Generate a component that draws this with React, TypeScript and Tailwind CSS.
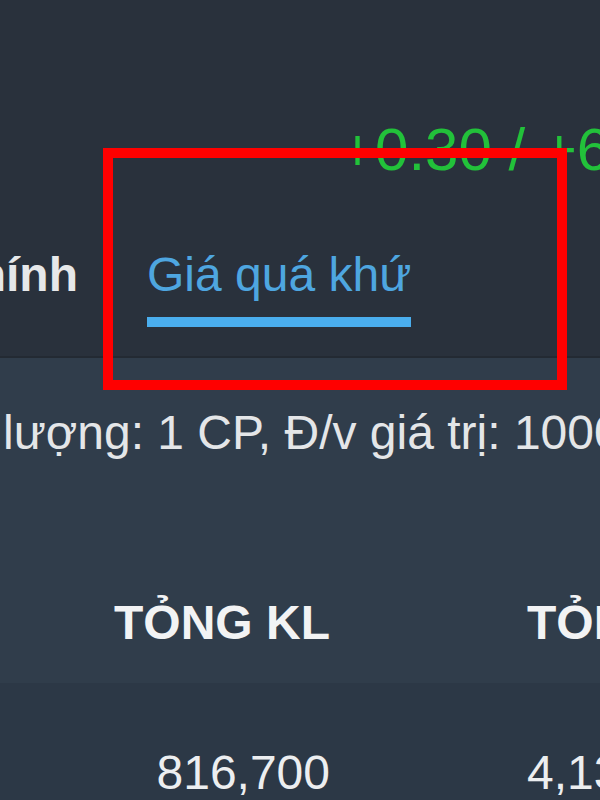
import React from "react";

const tabs = [
  { label: "Chỉ số chính", active: false },
  { label: "Giá quá khứ", active: true },
];

const columns = [
  { head: "TỎNG KL", value: "816,700" },
  { head: "TỎNG GT", value: "4,135,920" },
];

const App = () => {
  return (
    <div className="relative w-[600px] h-[800px] overflow-hidden bg-[#29313c] font-['Liberation_Sans',Arial,sans-serif]">
      {/* Header: price change + tabs */}
      <section className="h-[358px] border-b-2 border-[#232a33] overflow-hidden">
        <div className="pt-[120px] pl-[340px] h-[180px] whitespace-nowrap text-[60px] leading-none text-[#22c13a]">
          +0.30 / +6.38%
        </div>
        <div className="flex items-start mt-[71px] gap-[69px]">
          {tabs.map((tab, i) => (
            <div
              key={i}
              className={i === 0 ? "w-[78px] flex justify-end shrink-0" : "shrink-0"}
            >
              <div className="flex flex-col whitespace-nowrap">
                <span
                  className={
                    tab.active
                      ? "text-[48px] leading-none text-[#4ea6e0]"
                      : "text-[48px] leading-none font-bold text-[#e6e8ea]"
                  }
                >
                  {tab.label}
                </span>
                {tab.active && <div className="mt-[18px] h-[10px] bg-[#4aaeee]" />}
              </div>
            </div>
          ))}
        </div>
      </section>

      {/* Unit info */}
      <section className="bg-[#303d4b] pt-[51px] pb-[142px]">
        <p className="whitespace-nowrap pl-[3px] text-[48px] leading-none text-[#e4e6e8]">
          lượng: 1 CP, Đ/v giá trị: 1000 VNĐ
        </p>
      </section>

      {/* Table */}
      <div className="grid grid-cols-[330px_1fr] gap-x-[197px] bg-[#303d4b] h-[84px] whitespace-nowrap text-[48px] leading-none font-bold text-[#f2f3f4]">
        {columns.map((c) => (
          <div key={c.head} className="first:text-right">
            {c.head}
          </div>
        ))}
      </div>
      <div className="grid grid-cols-[330px_1fr] gap-x-[197px] bg-[#2c3846] pt-[66px] h-[200px] whitespace-nowrap text-[48px] leading-none text-[#eceef0]">
        {columns.map((c) => (
          <div key={c.value} className="first:text-right">
            {c.value}
          </div>
        ))}
      </div>

      {/* Highlight annotation */}
      <div className="absolute left-[103px] top-[148px] w-[464px] h-[242px] border-[10px] border-[#ff0000]" />
    </div>
  );
};

export default App;
